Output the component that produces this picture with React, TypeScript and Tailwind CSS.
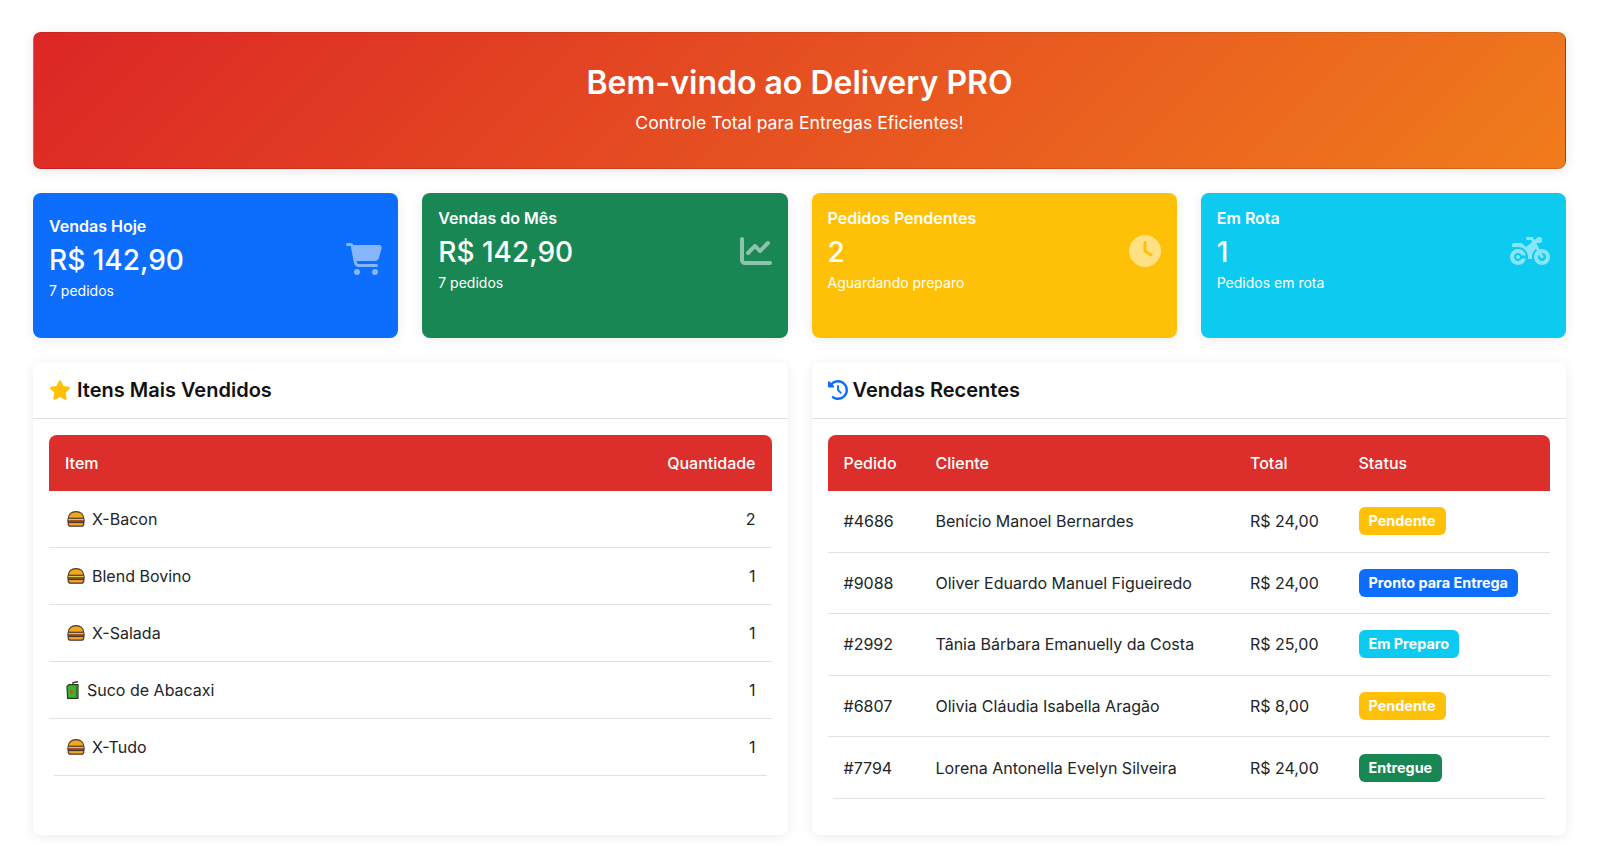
import React from "react";
import {
  FaCartShopping,
  FaChartLine,
  FaClock,
  FaMotorcycle,
  FaStar,
  FaClockRotateLeft,
} from "react-icons/fa6";

const Burger = () => (
  <svg width="18" height="16" viewBox="0 0 18 16" className="ml-[2px] shrink-0">
    <path d="M1.3 7.6C1.3 3 4.6 .6 9 .6s7.7 2.4 7.7 7z" fill="#f2a71b" stroke="#4e342e" strokeWidth="1.2" />
    <rect x="1" y="7.5" width="16" height="1.6" fill="#c8d24a" />
    <rect x="1" y="9" width="16" height="2.4" fill="#a6521f" />
    <path d="M1.2 11.3h15.6v1.4c0 1.4-1 2.5-2.5 2.5H3.7c-1.5 0-2.5-1.1-2.5-2.5z" fill="#f0a830" stroke="#4e342e" strokeWidth="1.2" />
    <rect x=".8" y="7.2" width="16.4" height="4.4" fill="none" stroke="#4e342e" strokeWidth="1" rx="1.5" />
  </svg>
);

const JuiceBox = () => (
  <svg width="14" height="18" viewBox="0 0 14 18" className="ml-px shrink-0">
    <path d="M7 4V1.6L12 .8" fill="none" stroke="#4e342e" strokeWidth="1.4" />
    <path d="M1 5.5L3 3.6h9v13.8H1.6z" fill="#43b02a" stroke="#263a1e" strokeWidth="1.2" />
    <rect x="9.8" y="4" width="2" height="13" fill="#2e7d32" />
    <circle cx="5.5" cy="10.5" r="1.6" fill="#d8432e" />
  </svg>
);

const cards = [
  { title: "Vendas Hoje", value: "R$ 142,90", sub: "7 pedidos", bg: "bg-[#0d6efd]", first: true, icon: <FaCartShopping size={36} /> },
  { title: "Vendas do Mês", value: "R$ 142,90", sub: "7 pedidos", bg: "bg-[#198754]", first: false, icon: <FaChartLine size={32} /> },
  { title: "Pedidos Pendentes", value: "2", sub: "Aguardando preparo", bg: "bg-[#ffc107]", first: false, icon: <FaClock size={32} /> },
  { title: "Em Rota", value: "1", sub: "Pedidos em rota", bg: "bg-[#0dcaf0]", first: false, icon: <FaMotorcycle size={40} /> },
];

const items = [
  { name: "X-Bacon", qty: 2, juice: false },
  { name: "Blend Bovino", qty: 1, juice: false },
  { name: "X-Salada", qty: 1, juice: false },
  { name: "Suco de Abacaxi", qty: 1, juice: true },
  { name: "X-Tudo", qty: 1, juice: false },
];

const sales = [
  { id: "#4686", client: "Benício Manoel Bernardes", total: "R$ 24,00", status: "Pendente", color: "bg-[#ffc107]" },
  { id: "#9088", client: "Oliver Eduardo Manuel Figueiredo", total: "R$ 24,00", status: "Pronto para Entrega", color: "bg-[#0d6efd]" },
  { id: "#2992", client: "Tânia Bárbara Emanuelly da Costa", total: "R$ 25,00", status: "Em Preparo", color: "bg-[#0dcaf0]" },
  { id: "#6807", client: "Olivia Cláudia Isabella Aragão", total: "R$ 8,00", status: "Pendente", color: "bg-[#ffc107]" },
  { id: "#7794", client: "Lorena Antonella Evelyn Silveira", total: "R$ 24,00", status: "Entregue", color: "bg-[#198754]" },
];

export default function App() {
  return (
    <div className="min-h-[855px] bg-white px-[33px] pt-8 text-[#212529] font-['Inter',sans-serif]">
      <div className="mb-6 flex h-[137px] flex-col items-center justify-center rounded-lg border border-black/10 bg-[linear-gradient(135deg,#dc2626,#f07c1c)] pb-[2px] text-white shadow-[0_2px_12px_rgba(0,0,0,0.1)]">
        <h1 className="text-[32px] leading-[38px] font-semibold">Bem-vindo ao Delivery PRO</h1>
        <p className="mt-[8px] text-[17.6px] leading-[26px]">Controle Total para Entregas Eficientes!</p>
      </div>

      <div className="mb-6 grid h-[145px] grid-cols-4 gap-6">
        {cards.map((c) => (
          <div key={c.title} className={`rounded-lg p-4 text-white shadow-[0_2px_12px_rgba(0,0,0,0.08)] ${c.bg} ${c.first ? "pt-6" : ""}`}>
            <div className="flex items-center justify-between">
              <div>
                <div className="text-base leading-[19px] font-semibold">{c.title}</div>
                <div className="mt-[7px] text-[28px] leading-[34px] font-medium">{c.value}</div>
                <div className="mt-[3px] text-sm leading-[21px]">{c.sub}</div>
              </div>
              <div className="text-white/50">{c.icon}</div>
            </div>
          </div>
        ))}
      </div>

      <div className="grid h-[473px] grid-cols-2 gap-6">
        <div className="rounded-lg bg-white shadow-[0_2px_12px_rgba(0,0,0,0.08)]">
          <div className="flex h-[57px] items-center gap-[6px] border-b border-[#dee2e6] px-4">
            <FaStar size={22} className="text-[#ffc107]" />
            <h2 className="text-xl font-semibold text-[#111]">Itens Mais Vendidos</h2>
          </div>
          <div className="p-4">
            <div className="flex h-[56px] items-center justify-between rounded-t-lg bg-[#dc2e2a] px-4 font-medium text-white">
              <span>Item</span>
              <span>Quantidade</span>
            </div>
            {items.map((it, i) => (
              <div
                key={it.name}
                className={`flex h-[57px] items-center justify-between border-b border-[#dee2e6] px-4 ${i === items.length - 1 ? "mx-[5px] px-[11px]" : ""}`}
              >
                <span className="flex items-center gap-[7px]">
                  {it.juice ? <JuiceBox /> : <Burger />}
                  {it.name}
                </span>
                <span>{it.qty}</span>
              </div>
            ))}
          </div>
        </div>

        <div className="rounded-lg bg-white shadow-[0_2px_12px_rgba(0,0,0,0.08)]">
          <div className="flex h-[57px] items-center gap-[5px] border-b border-[#dee2e6] px-4">
            <FaClockRotateLeft size={20} className="text-[#0d6efd]" />
            <h2 className="text-xl font-semibold text-[#111]">Vendas Recentes</h2>
          </div>
          <div className="p-4">
            <div className="grid h-[56px] grid-cols-[92px_314.5px_108.5px_1fr] items-center rounded-t-lg bg-[#dc2e2a] px-4 font-medium text-white">
              <span>Pedido</span>
              <span>Cliente</span>
              <span>Total</span>
              <span>Status</span>
            </div>
            {sales.map((s, i) => (
              <div
                key={s.id}
                className={`grid grid-cols-[92px_314.5px_108.5px_1fr] items-center border-b border-[#dee2e6] ${i === sales.length - 1 ? "mx-[5px] h-[62px] px-[11px]" : "h-[61.5px] px-4"}`}
              >
                <span>{s.id}</span>
                <span>{s.client}</span>
                <span>{s.total}</span>
                <span>
                  <span className={`inline-block h-7 rounded-md px-[10px] text-[14.4px] leading-7 font-bold text-white ${s.color}`}>
                    {s.status}
                  </span>
                </span>
              </div>
            ))}
          </div>
        </div>
      </div>
    </div>
  );
}
